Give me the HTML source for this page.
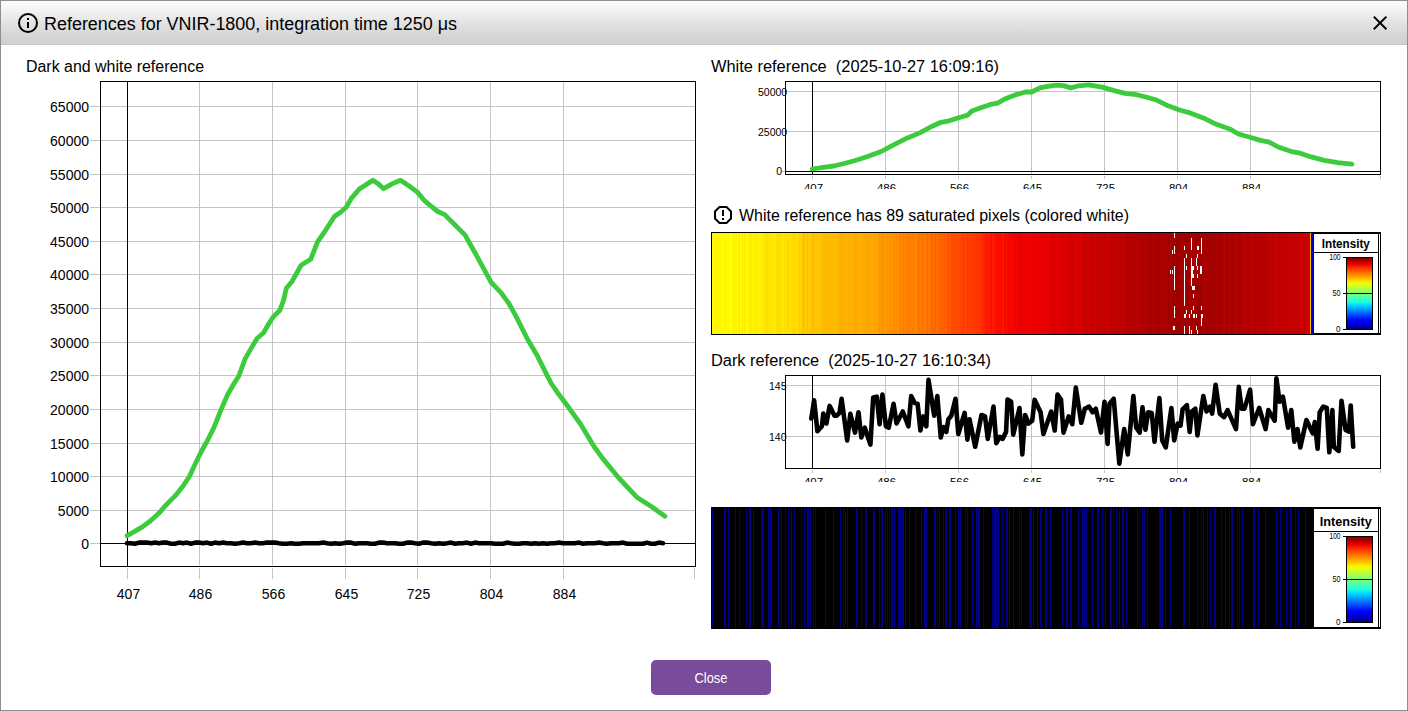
<!DOCTYPE html>
<html><head><meta charset="utf-8">
<style>
html,body{margin:0;padding:0;background:#fff;}
body{width:1408px;height:711px;position:relative;overflow:hidden;font-family:"Liberation Sans", sans-serif;}
.frame{position:absolute;left:0;top:0;width:1406px;height:709px;border:1px solid #8e8e8e;}
.title{position:absolute;left:1px;top:1px;width:1406px;height:43px;background:linear-gradient(#fdfdfd 0%,#f3f3f3 22%,#e2e2e2 52%,#d4d4d4 85%,#d1d1d1 100%);border-bottom:1px solid #c6c6c6;}
svg{position:absolute;left:0;top:0;}
svg text{font-family:"Liberation Sans", sans-serif;white-space:pre;}
.btn{position:absolute;left:651px;top:660px;width:120px;height:35px;background:#784b9b;border-radius:5px;}
</style></head><body>
<div class="frame"></div>
<div class="title"></div>
<div class="btn"></div>
<svg width="1408" height="711" viewBox="0 0 1408 711">
<defs>
<linearGradient id="jet" x1="0" y1="0" x2="0" y2="1"><stop offset="0.000" stop-color="#800000"/><stop offset="0.025" stop-color="#9c0000"/><stop offset="0.050" stop-color="#b90000"/><stop offset="0.075" stop-color="#d60000"/><stop offset="0.100" stop-color="#f30900"/><stop offset="0.125" stop-color="#ff2100"/><stop offset="0.150" stop-color="#ff3900"/><stop offset="0.175" stop-color="#ff5000"/><stop offset="0.200" stop-color="#ff6800"/><stop offset="0.225" stop-color="#ff8000"/><stop offset="0.250" stop-color="#ff9700"/><stop offset="0.275" stop-color="#ffaf00"/><stop offset="0.300" stop-color="#ffc600"/><stop offset="0.325" stop-color="#ffde00"/><stop offset="0.350" stop-color="#f7f600"/><stop offset="0.375" stop-color="#e2ff15"/><stop offset="0.400" stop-color="#ceff29"/><stop offset="0.425" stop-color="#b9ff3e"/><stop offset="0.450" stop-color="#a5ff52"/><stop offset="0.475" stop-color="#90ff67"/><stop offset="0.500" stop-color="#7bff7b"/><stop offset="0.525" stop-color="#67ff90"/><stop offset="0.550" stop-color="#52ffa5"/><stop offset="0.575" stop-color="#3effb9"/><stop offset="0.600" stop-color="#29ffce"/><stop offset="0.625" stop-color="#15ffe2"/><stop offset="0.650" stop-color="#00e5f7"/><stop offset="0.675" stop-color="#00ccff"/><stop offset="0.700" stop-color="#00b2ff"/><stop offset="0.725" stop-color="#0099ff"/><stop offset="0.750" stop-color="#0080ff"/><stop offset="0.775" stop-color="#0066ff"/><stop offset="0.800" stop-color="#004dff"/><stop offset="0.825" stop-color="#0033ff"/><stop offset="0.850" stop-color="#0019ff"/><stop offset="0.875" stop-color="#0000ff"/><stop offset="0.900" stop-color="#0000f3"/><stop offset="0.925" stop-color="#0000d6"/><stop offset="0.950" stop-color="#0000b9"/><stop offset="0.975" stop-color="#00009c"/><stop offset="1.000" stop-color="#000080"/></linearGradient>
</defs>
<circle cx="28" cy="23" r="9" fill="none" stroke="#000" stroke-width="2"/>
<rect x="27" y="22" width="2" height="6" fill="#000"/><rect x="27" y="18" width="2" height="2" fill="#000"/>
<path d="M1373.8,16.6 L1386.4,29.2 M1386.4,16.6 L1373.8,29.2" stroke="#000" stroke-width="2"/>
<text x="44" y="30" font-size="18" textLength="413" lengthAdjust="spacingAndGlyphs" fill="#000">References for VNIR-1800, integration time 1250 μs</text>
<text x="26" y="72" font-size="16" textLength="178" lengthAdjust="spacingAndGlyphs" fill="#000">Dark and white reference</text>
<text x="711" y="72" font-size="16" textLength="288" lengthAdjust="spacingAndGlyphs" fill="#000">White reference  (2025-10-27 16:09:16)</text>
<text x="739" y="221" font-size="16" textLength="390" lengthAdjust="spacingAndGlyphs" fill="#000">White reference has 89 saturated pixels (colored white)</text>
<text x="711" y="366" font-size="16" textLength="280" lengthAdjust="spacingAndGlyphs" fill="#000">Dark reference  (2025-10-27 16:10:34)</text>
<text x="711" y="683" font-size="14" text-anchor="middle" textLength="33" lengthAdjust="spacingAndGlyphs" fill="#fff">Close</text>
<rect x="90" y="543" width="10" height="1" fill="#c4c4c4"/>
<rect x="90" y="510" width="10" height="1" fill="#c4c4c4"/>
<rect x="101" y="510" width="594" height="1" fill="#c4c4c4"/>
<rect x="90" y="476" width="10" height="1" fill="#c4c4c4"/>
<rect x="101" y="476" width="594" height="1" fill="#c4c4c4"/>
<rect x="90" y="443" width="10" height="1" fill="#c4c4c4"/>
<rect x="101" y="443" width="594" height="1" fill="#c4c4c4"/>
<rect x="90" y="409" width="10" height="1" fill="#c4c4c4"/>
<rect x="101" y="409" width="594" height="1" fill="#c4c4c4"/>
<rect x="90" y="375" width="10" height="1" fill="#c4c4c4"/>
<rect x="101" y="375" width="594" height="1" fill="#c4c4c4"/>
<rect x="90" y="342" width="10" height="1" fill="#c4c4c4"/>
<rect x="101" y="342" width="594" height="1" fill="#c4c4c4"/>
<rect x="90" y="308" width="10" height="1" fill="#c4c4c4"/>
<rect x="101" y="308" width="594" height="1" fill="#c4c4c4"/>
<rect x="90" y="274" width="10" height="1" fill="#c4c4c4"/>
<rect x="101" y="274" width="594" height="1" fill="#c4c4c4"/>
<rect x="90" y="241" width="10" height="1" fill="#c4c4c4"/>
<rect x="101" y="241" width="594" height="1" fill="#c4c4c4"/>
<rect x="90" y="207" width="10" height="1" fill="#c4c4c4"/>
<rect x="101" y="207" width="594" height="1" fill="#c4c4c4"/>
<rect x="90" y="174" width="10" height="1" fill="#c4c4c4"/>
<rect x="101" y="174" width="594" height="1" fill="#c4c4c4"/>
<rect x="90" y="140" width="10" height="1" fill="#c4c4c4"/>
<rect x="101" y="140" width="594" height="1" fill="#c4c4c4"/>
<rect x="90" y="106" width="10" height="1" fill="#c4c4c4"/>
<rect x="101" y="106" width="594" height="1" fill="#c4c4c4"/>
<rect x="199" y="82" width="1" height="483" fill="#c4c4c4"/>
<rect x="272" y="82" width="1" height="483" fill="#c4c4c4"/>
<rect x="345" y="82" width="1" height="483" fill="#c4c4c4"/>
<rect x="417" y="82" width="1" height="483" fill="#c4c4c4"/>
<rect x="490" y="82" width="1" height="483" fill="#c4c4c4"/>
<rect x="563" y="82" width="1" height="483" fill="#c4c4c4"/>
<rect x="127" y="568" width="1" height="11" fill="#c4c4c4"/>
<rect x="199" y="568" width="1" height="11" fill="#c4c4c4"/>
<rect x="272" y="568" width="1" height="11" fill="#c4c4c4"/>
<rect x="345" y="568" width="1" height="11" fill="#c4c4c4"/>
<rect x="417" y="568" width="1" height="11" fill="#c4c4c4"/>
<rect x="490" y="568" width="1" height="11" fill="#c4c4c4"/>
<rect x="563" y="568" width="1" height="11" fill="#c4c4c4"/>
<rect x="694" y="568" width="1" height="11" fill="#c4c4c4"/>
<rect x="100.5" y="81.5" width="595" height="485" fill="none" stroke="#000"/>
<rect x="127" y="81" width="1" height="486" fill="#000"/>
<rect x="100" y="543" width="595" height="1" fill="#000"/>
<text x="89" y="549" font-size="14" text-anchor="end" fill="#000">0</text>
<text x="89" y="516" font-size="14" text-anchor="end" fill="#000">5000</text>
<text x="89" y="482" font-size="14" text-anchor="end" fill="#000">10000</text>
<text x="89" y="449" font-size="14" text-anchor="end" fill="#000">15000</text>
<text x="89" y="415" font-size="14" text-anchor="end" fill="#000">20000</text>
<text x="89" y="381" font-size="14" text-anchor="end" fill="#000">25000</text>
<text x="89" y="348" font-size="14" text-anchor="end" fill="#000">30000</text>
<text x="89" y="314" font-size="14" text-anchor="end" fill="#000">35000</text>
<text x="89" y="280" font-size="14" text-anchor="end" fill="#000">40000</text>
<text x="89" y="247" font-size="14" text-anchor="end" fill="#000">45000</text>
<text x="89" y="213" font-size="14" text-anchor="end" fill="#000">50000</text>
<text x="89" y="180" font-size="14" text-anchor="end" fill="#000">55000</text>
<text x="89" y="146" font-size="14" text-anchor="end" fill="#000">60000</text>
<text x="89" y="112" font-size="14" text-anchor="end" fill="#000">65000</text>
<text x="128.5" y="599" font-size="14" text-anchor="middle" fill="#000">407</text>
<text x="200.5" y="599" font-size="14" text-anchor="middle" fill="#000">486</text>
<text x="273.5" y="599" font-size="14" text-anchor="middle" fill="#000">566</text>
<text x="346.5" y="599" font-size="14" text-anchor="middle" fill="#000">645</text>
<text x="418.5" y="599" font-size="14" text-anchor="middle" fill="#000">725</text>
<text x="491.5" y="599" font-size="14" text-anchor="middle" fill="#000">804</text>
<text x="564.5" y="599" font-size="14" text-anchor="middle" fill="#000">884</text>
<path d="M127.1,535.7 L134.3,531.6 L142.4,526.9 L150.6,520.8 L158.8,513.3 L166.9,504.1 L175.1,495.9 L183.3,485.7 L189.4,476.5 L195.5,463.3 L201.6,451.0 L207.8,439.8 L213.9,427.6 L221.4,408.9 L227.8,394.3 L234.2,383.3 L238.8,376.0 L245.2,358.6 L251.6,347.6 L257.0,338.5 L263.4,333.0 L269.8,322.0 L273.5,316.6 L279.9,310.2 L283.6,300.1 L286.3,288.2 L291.8,281.8 L301.1,265.3 L310.7,259.3 L317.8,241.3 L323.8,233.0 L334.6,216.2 L340.6,212.2 L346.6,206.7 L351.3,198.3 L359.7,188.7 L368.1,183.4 L372.9,180.3 L377.7,183.4 L383.6,188.7 L392.0,183.9 L400.4,180.3 L408.8,185.8 L417.7,192.4 L423.9,200.1 L430.1,205.4 L437.8,211.5 L444.6,214.6 L453.3,223.3 L465.1,235.1 L475.0,252.7 L484.2,269.7 L491.0,282.1 L501.2,292.9 L509.0,303.7 L516.7,317.6 L527.5,339.3 L536.8,354.8 L546.1,373.3 L551.3,383.5 L559.1,394.8 L569.3,408.3 L580.5,424.0 L594.0,446.5 L603.0,458.9 L618.8,478.0 L636.8,497.2 L652.5,507.3 L664.9,516.3" fill="none" stroke="#3ccb3c" stroke-width="4.8" stroke-linejoin="round" stroke-linecap="round"/>
<path d="M127.0,543.2 L131.0,543.2 L135.0,543.7 L139.0,542.6 L143.0,542.6 L147.0,542.6 L151.0,543.2 L155.0,542.6 L159.0,543.2 L163.0,542.6 L167.0,542.6 L171.0,543.7 L175.0,543.7 L179.0,542.6 L183.0,543.2 L187.0,542.6 L191.0,543.7 L195.0,542.6 L199.0,542.6 L203.0,543.2 L207.0,542.6 L211.0,543.7 L215.0,542.6 L219.0,543.2 L223.0,542.6 L227.0,543.2 L231.0,543.2 L235.0,543.7 L239.0,543.2 L243.0,542.6 L247.0,543.2 L251.0,543.2 L255.0,542.6 L259.0,543.2 L263.0,543.2 L267.0,542.6 L271.0,542.6 L275.0,542.6 L279.0,543.2 L283.0,543.7 L287.0,543.7 L291.0,543.2 L295.0,543.7 L299.0,543.7 L303.0,543.2 L307.0,543.2 L311.0,543.2 L315.0,543.2 L319.0,543.2 L323.0,542.6 L327.0,543.2 L331.0,543.7 L335.0,543.2 L339.0,543.7 L343.0,543.2 L347.0,542.6 L351.0,542.6 L355.0,543.7 L359.0,543.2 L363.0,543.2 L367.0,543.2 L371.0,543.7 L375.0,543.7 L379.0,542.6 L383.0,542.6 L387.0,543.2 L391.0,543.2 L395.0,543.2 L399.0,543.7 L403.0,543.7 L407.0,542.6 L411.0,542.6 L415.0,543.2 L419.0,543.7 L423.0,542.6 L427.0,542.6 L431.0,543.2 L435.0,543.7 L439.0,543.2 L443.0,543.7 L447.0,543.2 L451.0,542.6 L455.0,543.7 L459.0,543.2 L463.0,543.2 L467.0,542.6 L471.0,543.7 L475.0,542.6 L479.0,543.2 L483.0,543.2 L487.0,543.2 L491.0,543.2 L495.0,543.7 L499.0,543.7 L503.0,543.7 L507.0,542.6 L511.0,543.2 L515.0,543.7 L519.0,543.7 L523.0,543.2 L527.0,543.2 L531.0,543.7 L535.0,543.2 L539.0,543.7 L543.0,543.2 L547.0,543.7 L551.0,543.2 L555.0,543.2 L559.0,542.6 L563.0,543.2 L567.0,543.2 L571.0,543.2 L575.0,543.2 L579.0,542.6 L583.0,543.7 L587.0,543.2 L591.0,543.2 L595.0,543.2 L599.0,542.6 L603.0,543.2 L607.0,543.7 L611.0,543.2 L615.0,543.2 L619.0,543.2 L623.0,542.6 L627.0,543.7 L631.0,543.7 L635.0,543.7 L639.0,543.7 L643.0,543.7 L647.0,542.6 L651.0,543.7 L655.0,543.7 L659.0,542.6 L663.0,543.2" fill="none" stroke="#000" stroke-width="4.6" stroke-linejoin="round" stroke-linecap="round"/>
<rect x="782" y="91" width="598" height="1" fill="#c4c4c4"/>
<rect x="782" y="131" width="598" height="1" fill="#c4c4c4"/>
<rect x="782" y="171" width="598" height="1" fill="#c4c4c4"/>
<rect x="885" y="82" width="1" height="92" fill="#c4c4c4"/>
<rect x="958" y="82" width="1" height="92" fill="#c4c4c4"/>
<rect x="1031" y="82" width="1" height="92" fill="#c4c4c4"/>
<rect x="1104" y="82" width="1" height="92" fill="#c4c4c4"/>
<rect x="1177" y="82" width="1" height="92" fill="#c4c4c4"/>
<rect x="1250" y="82" width="1" height="92" fill="#c4c4c4"/>
<rect x="812" y="176" width="1" height="3" fill="#c4c4c4"/>
<rect x="885" y="176" width="1" height="3" fill="#c4c4c4"/>
<rect x="958" y="176" width="1" height="3" fill="#c4c4c4"/>
<rect x="1031" y="176" width="1" height="3" fill="#c4c4c4"/>
<rect x="1104" y="176" width="1" height="3" fill="#c4c4c4"/>
<rect x="1177" y="176" width="1" height="3" fill="#c4c4c4"/>
<rect x="1250" y="176" width="1" height="3" fill="#c4c4c4"/>
<rect x="1380" y="176" width="1" height="3" fill="#c4c4c4"/>
<g clip-path="url(#clip81)">
<text x="813.5" y="192" font-size="11.5" text-anchor="middle" fill="#000">407</text>
<text x="886.5" y="192" font-size="11.5" text-anchor="middle" fill="#000">486</text>
<text x="959.5" y="192" font-size="11.5" text-anchor="middle" fill="#000">566</text>
<text x="1032.5" y="192" font-size="11.5" text-anchor="middle" fill="#000">645</text>
<text x="1105.5" y="192" font-size="11.5" text-anchor="middle" fill="#000">725</text>
<text x="1178.5" y="192" font-size="11.5" text-anchor="middle" fill="#000">804</text>
<text x="1251.5" y="192" font-size="11.5" text-anchor="middle" fill="#000">884</text>
</g>
<clipPath id="clip81"><rect x="770" y="179" width="620" height="10"/></clipPath>
<text x="758" y="96" font-size="10.5" fill="#000">50000</text>
<text x="758" y="136" font-size="10.5" fill="#000">25000</text>
<text x="782" y="175" font-size="10.5" text-anchor="end" fill="#000">0</text>
<rect x="785.5" y="81.5" width="595" height="93" fill="none" stroke="#000"/>
<rect x="812" y="81" width="1" height="94" fill="#000"/>
<rect x="785" y="171" width="596" height="1" fill="#000"/>
<path d="M812.2,169.0 L821.5,167.6 L833.8,166.0 L844.1,163.5 L854.4,160.8 L866.8,156.7 L881.2,151.5 L893.6,144.9 L908.0,137.7 L920.3,132.6 L930.6,127.0 L940.9,122.3 L949.2,120.8 L959.5,117.5 L967.7,115.1 L971.8,111.0 L980.1,107.9 L990.4,104.4 L997.6,103.1 L1004.8,99.0 L1015.1,94.9 L1025.4,92.0 L1031.6,92.0 L1039.8,87.9 L1046.0,86.7 L1056.3,85.2 L1063.5,85.6 L1070.7,87.9 L1078.9,85.8 L1088.8,84.9 L1102.0,87.1 L1115.2,90.9 L1126.2,93.7 L1135.0,94.4 L1146.0,97.0 L1157.1,100.3 L1168.1,105.8 L1180.2,110.2 L1190.1,112.9 L1203.3,117.9 L1214.3,123.4 L1229.7,128.9 L1238.5,134.0 L1251.7,137.7 L1260.5,140.4 L1269.3,142.2 L1278.2,147.0 L1291.4,151.6 L1300.2,153.2 L1311.2,156.9 L1324.4,160.4 L1337.6,162.6 L1351.9,164.2" fill="none" stroke="#3ccb3c" stroke-width="4.8" stroke-linejoin="round" stroke-linecap="round"/>
<path d="M719.5,207 L726.5,207 L731,211.5 L731,218.5 L726.5,223 L719.5,223 L715,218.5 L715,211.5 Z" fill="none" stroke="#000" stroke-width="2"/>
<rect x="722" y="210" width="2" height="6" fill="#000"/><rect x="722" y="218" width="2" height="2" fill="#000"/>
<rect x="712" y="233" width="1" height="101" fill="#fff600"/>
<rect x="713" y="233" width="1" height="101" fill="#fff900"/>
<rect x="714" y="233" width="1" height="101" fill="#fff800"/>
<rect x="715" y="233" width="1" height="101" fill="#fffb00"/>
<rect x="716" y="233" width="1" height="101" fill="#fff500"/>
<rect x="717" y="233" width="1" height="101" fill="#fff400"/>
<rect x="718" y="233" width="1" height="101" fill="#fff600"/>
<rect x="719" y="233" width="1" height="101" fill="#fff500"/>
<rect x="720" y="233" width="1" height="101" fill="#fffa00"/>
<rect x="721" y="233" width="1" height="101" fill="#fff300"/>
<rect x="722" y="233" width="1" height="101" fill="#ffff00"/>
<rect x="723" y="233" width="1" height="101" fill="#fffe00"/>
<rect x="724" y="233" width="1" height="101" fill="#fff500"/>
<rect x="725" y="233" width="1" height="101" fill="#fff600"/>
<rect x="726" y="233" width="1" height="101" fill="#fff800"/>
<rect x="727" y="233" width="1" height="101" fill="#fff800"/>
<rect x="728" y="233" width="1" height="101" fill="#fff300"/>
<rect x="729" y="233" width="1" height="101" fill="#ffff00"/>
<rect x="730" y="233" width="1" height="101" fill="#ffff00"/>
<rect x="731" y="233" width="1" height="101" fill="#fff900"/>
<rect x="732" y="233" width="1" height="101" fill="#fff900"/>
<rect x="733" y="233" width="1" height="101" fill="#fff000"/>
<rect x="734" y="233" width="1" height="101" fill="#fff000"/>
<rect x="735" y="233" width="1" height="101" fill="#fff400"/>
<rect x="736" y="233" width="1" height="101" fill="#fff200"/>
<rect x="737" y="233" width="1" height="101" fill="#fffd00"/>
<rect x="738" y="233" width="1" height="101" fill="#ffef00"/>
<rect x="739" y="233" width="1" height="101" fill="#ffec00"/>
<rect x="740" y="233" width="1" height="101" fill="#fffe00"/>
<rect x="741" y="233" width="1" height="101" fill="#fff500"/>
<rect x="742" y="233" width="1" height="101" fill="#ffed00"/>
<rect x="743" y="233" width="1" height="101" fill="#fff400"/>
<rect x="744" y="233" width="1" height="101" fill="#ffe900"/>
<rect x="745" y="233" width="1" height="101" fill="#fff300"/>
<rect x="746" y="233" width="1" height="101" fill="#fffb00"/>
<rect x="747" y="233" width="1" height="101" fill="#fff900"/>
<rect x="748" y="233" width="1" height="101" fill="#fff500"/>
<rect x="749" y="233" width="1" height="101" fill="#ffeb00"/>
<rect x="750" y="233" width="1" height="101" fill="#ffed00"/>
<rect x="751" y="233" width="1" height="101" fill="#ffe900"/>
<rect x="752" y="233" width="1" height="101" fill="#fff400"/>
<rect x="753" y="233" width="1" height="101" fill="#ffef00"/>
<rect x="754" y="233" width="1" height="101" fill="#fff300"/>
<rect x="755" y="233" width="1" height="101" fill="#ffea00"/>
<rect x="756" y="233" width="1" height="101" fill="#ffe700"/>
<rect x="757" y="233" width="1" height="101" fill="#fff200"/>
<rect x="758" y="233" width="1" height="101" fill="#fff500"/>
<rect x="759" y="233" width="1" height="101" fill="#fff200"/>
<rect x="760" y="233" width="1" height="101" fill="#fff100"/>
<rect x="761" y="233" width="1" height="101" fill="#fff000"/>
<rect x="762" y="233" width="1" height="101" fill="#ffee00"/>
<rect x="763" y="233" width="1" height="101" fill="#ffe400"/>
<rect x="764" y="233" width="1" height="101" fill="#ffe900"/>
<rect x="765" y="233" width="1" height="101" fill="#ffe500"/>
<rect x="766" y="233" width="1" height="101" fill="#ffde00"/>
<rect x="767" y="233" width="1" height="101" fill="#ffdd00"/>
<rect x="768" y="233" width="1" height="101" fill="#ffe200"/>
<rect x="769" y="233" width="1" height="101" fill="#ffe100"/>
<rect x="770" y="233" width="1" height="101" fill="#ffe900"/>
<rect x="771" y="233" width="1" height="101" fill="#ffee00"/>
<rect x="772" y="233" width="1" height="101" fill="#ffe300"/>
<rect x="773" y="233" width="1" height="101" fill="#ffec00"/>
<rect x="774" y="233" width="1" height="101" fill="#ffed00"/>
<rect x="775" y="233" width="1" height="101" fill="#ffec00"/>
<rect x="776" y="233" width="1" height="101" fill="#ffdf00"/>
<rect x="777" y="233" width="1" height="101" fill="#ffdc00"/>
<rect x="778" y="233" width="1" height="101" fill="#ffdc00"/>
<rect x="779" y="233" width="1" height="101" fill="#ffda00"/>
<rect x="780" y="233" width="1" height="101" fill="#ffda00"/>
<rect x="781" y="233" width="1" height="101" fill="#ffe200"/>
<rect x="782" y="233" width="1" height="101" fill="#ffe700"/>
<rect x="783" y="233" width="1" height="101" fill="#ffe500"/>
<rect x="784" y="233" width="1" height="101" fill="#ffdd00"/>
<rect x="785" y="233" width="1" height="101" fill="#ffe000"/>
<rect x="786" y="233" width="1" height="101" fill="#ffe300"/>
<rect x="787" y="233" width="1" height="101" fill="#ffd400"/>
<rect x="788" y="233" width="1" height="101" fill="#ffdf00"/>
<rect x="789" y="233" width="1" height="101" fill="#ffe300"/>
<rect x="790" y="233" width="1" height="101" fill="#ffe000"/>
<rect x="791" y="233" width="1" height="101" fill="#ffdf00"/>
<rect x="792" y="233" width="1" height="101" fill="#ffd900"/>
<rect x="793" y="233" width="1" height="101" fill="#ffd300"/>
<rect x="794" y="233" width="1" height="101" fill="#ffde00"/>
<rect x="795" y="233" width="1" height="101" fill="#ffd500"/>
<rect x="796" y="233" width="1" height="101" fill="#ffde00"/>
<rect x="797" y="233" width="1" height="101" fill="#ffe000"/>
<rect x="798" y="233" width="1" height="101" fill="#ffd200"/>
<rect x="799" y="233" width="1" height="101" fill="#ffd000"/>
<rect x="800" y="233" width="1" height="101" fill="#ffd800"/>
<rect x="801" y="233" width="1" height="101" fill="#ffd100"/>
<rect x="802" y="233" width="1" height="101" fill="#ffc400"/>
<rect x="803" y="233" width="1" height="101" fill="#ffc100"/>
<rect x="804" y="233" width="1" height="101" fill="#ffc000"/>
<rect x="805" y="233" width="1" height="101" fill="#ffcf00"/>
<rect x="806" y="233" width="1" height="101" fill="#ffcc00"/>
<rect x="807" y="233" width="1" height="101" fill="#ffbf00"/>
<rect x="808" y="233" width="1" height="101" fill="#ffcc00"/>
<rect x="809" y="233" width="1" height="101" fill="#ffce00"/>
<rect x="810" y="233" width="1" height="101" fill="#ffc700"/>
<rect x="811" y="233" width="1" height="101" fill="#ffc000"/>
<rect x="812" y="233" width="1" height="101" fill="#ffc400"/>
<rect x="813" y="233" width="1" height="101" fill="#ffbb00"/>
<rect x="814" y="233" width="1" height="101" fill="#ffb800"/>
<rect x="815" y="233" width="1" height="101" fill="#ffca00"/>
<rect x="816" y="233" width="1" height="101" fill="#ffc300"/>
<rect x="817" y="233" width="1" height="101" fill="#ffc000"/>
<rect x="818" y="233" width="1" height="101" fill="#ffc800"/>
<rect x="819" y="233" width="1" height="101" fill="#ffbd00"/>
<rect x="820" y="233" width="1" height="101" fill="#ffc500"/>
<rect x="821" y="233" width="1" height="101" fill="#ffc400"/>
<rect x="822" y="233" width="1" height="101" fill="#ffb700"/>
<rect x="823" y="233" width="1" height="101" fill="#ffb800"/>
<rect x="824" y="233" width="1" height="101" fill="#ffb800"/>
<rect x="825" y="233" width="1" height="101" fill="#ffb600"/>
<rect x="826" y="233" width="1" height="101" fill="#ffbd00"/>
<rect x="827" y="233" width="1" height="101" fill="#ffb600"/>
<rect x="828" y="233" width="1" height="101" fill="#ffb900"/>
<rect x="829" y="233" width="1" height="101" fill="#ffb200"/>
<rect x="830" y="233" width="1" height="101" fill="#ffc100"/>
<rect x="831" y="233" width="1" height="101" fill="#ffb600"/>
<rect x="832" y="233" width="1" height="101" fill="#ffb700"/>
<rect x="833" y="233" width="1" height="101" fill="#ffb900"/>
<rect x="834" y="233" width="1" height="101" fill="#ffbf00"/>
<rect x="835" y="233" width="1" height="101" fill="#ffb500"/>
<rect x="836" y="233" width="1" height="101" fill="#ffbf00"/>
<rect x="837" y="233" width="1" height="101" fill="#ffb600"/>
<rect x="838" y="233" width="1" height="101" fill="#ffb600"/>
<rect x="839" y="233" width="1" height="101" fill="#ffb500"/>
<rect x="840" y="233" width="1" height="101" fill="#ffab00"/>
<rect x="841" y="233" width="1" height="101" fill="#ffb300"/>
<rect x="842" y="233" width="1" height="101" fill="#ffad00"/>
<rect x="843" y="233" width="1" height="101" fill="#ffa900"/>
<rect x="844" y="233" width="1" height="101" fill="#ffb800"/>
<rect x="845" y="233" width="1" height="101" fill="#ffab00"/>
<rect x="846" y="233" width="1" height="101" fill="#ffb100"/>
<rect x="847" y="233" width="1" height="101" fill="#ffb500"/>
<rect x="848" y="233" width="1" height="101" fill="#ffb200"/>
<rect x="849" y="233" width="1" height="101" fill="#ffad00"/>
<rect x="850" y="233" width="1" height="101" fill="#ffb000"/>
<rect x="851" y="233" width="1" height="101" fill="#ffb000"/>
<rect x="852" y="233" width="1" height="101" fill="#ffb400"/>
<rect x="853" y="233" width="1" height="101" fill="#ffa600"/>
<rect x="854" y="233" width="1" height="101" fill="#ffae00"/>
<rect x="855" y="233" width="1" height="101" fill="#ffa800"/>
<rect x="856" y="233" width="1" height="101" fill="#ffa800"/>
<rect x="857" y="233" width="1" height="101" fill="#ffb100"/>
<rect x="858" y="233" width="1" height="101" fill="#ffab00"/>
<rect x="859" y="233" width="1" height="101" fill="#ffac00"/>
<rect x="860" y="233" width="1" height="101" fill="#ffaf00"/>
<rect x="861" y="233" width="1" height="101" fill="#ffb200"/>
<rect x="862" y="233" width="1" height="101" fill="#ffa800"/>
<rect x="863" y="233" width="1" height="101" fill="#ffab00"/>
<rect x="864" y="233" width="1" height="101" fill="#ffa800"/>
<rect x="865" y="233" width="1" height="101" fill="#ffa700"/>
<rect x="866" y="233" width="1" height="101" fill="#ffaa00"/>
<rect x="867" y="233" width="1" height="101" fill="#ffa500"/>
<rect x="868" y="233" width="1" height="101" fill="#ffa600"/>
<rect x="869" y="233" width="1" height="101" fill="#ffa500"/>
<rect x="870" y="233" width="1" height="101" fill="#ffad00"/>
<rect x="871" y="233" width="1" height="101" fill="#ffa800"/>
<rect x="872" y="233" width="1" height="101" fill="#ffab00"/>
<rect x="873" y="233" width="1" height="101" fill="#ffac00"/>
<rect x="874" y="233" width="1" height="101" fill="#ff9d00"/>
<rect x="875" y="233" width="1" height="101" fill="#ffa300"/>
<rect x="876" y="233" width="1" height="101" fill="#ffaa00"/>
<rect x="877" y="233" width="1" height="101" fill="#ffa700"/>
<rect x="878" y="233" width="1" height="101" fill="#ff9900"/>
<rect x="879" y="233" width="1" height="101" fill="#ff9700"/>
<rect x="880" y="233" width="1" height="101" fill="#ff9c00"/>
<rect x="881" y="233" width="1" height="101" fill="#ff9300"/>
<rect x="882" y="233" width="1" height="101" fill="#ff9500"/>
<rect x="883" y="233" width="1" height="101" fill="#ff9100"/>
<rect x="884" y="233" width="1" height="101" fill="#ff9b00"/>
<rect x="885" y="233" width="1" height="101" fill="#ff9c00"/>
<rect x="886" y="233" width="1" height="101" fill="#ff9d00"/>
<rect x="887" y="233" width="1" height="101" fill="#ff8d00"/>
<rect x="888" y="233" width="1" height="101" fill="#ff9700"/>
<rect x="889" y="233" width="1" height="101" fill="#ff9500"/>
<rect x="890" y="233" width="1" height="101" fill="#ff8900"/>
<rect x="891" y="233" width="1" height="101" fill="#ff9600"/>
<rect x="892" y="233" width="1" height="101" fill="#ff9700"/>
<rect x="893" y="233" width="1" height="101" fill="#ff8600"/>
<rect x="894" y="233" width="1" height="101" fill="#ff9400"/>
<rect x="895" y="233" width="1" height="101" fill="#ff8900"/>
<rect x="896" y="233" width="1" height="101" fill="#ff8a00"/>
<rect x="897" y="233" width="1" height="101" fill="#ff9300"/>
<rect x="898" y="233" width="1" height="101" fill="#ff8f00"/>
<rect x="899" y="233" width="1" height="101" fill="#ff8100"/>
<rect x="900" y="233" width="1" height="101" fill="#ff8600"/>
<rect x="901" y="233" width="1" height="101" fill="#ff8700"/>
<rect x="902" y="233" width="1" height="101" fill="#ff8300"/>
<rect x="903" y="233" width="1" height="101" fill="#ff7f00"/>
<rect x="904" y="233" width="1" height="101" fill="#ff8100"/>
<rect x="905" y="233" width="1" height="101" fill="#ff8800"/>
<rect x="906" y="233" width="1" height="101" fill="#ff7900"/>
<rect x="907" y="233" width="1" height="101" fill="#ff8300"/>
<rect x="908" y="233" width="1" height="101" fill="#ff8000"/>
<rect x="909" y="233" width="1" height="101" fill="#ff7700"/>
<rect x="910" y="233" width="1" height="101" fill="#ff7d00"/>
<rect x="911" y="233" width="1" height="101" fill="#ff8200"/>
<rect x="912" y="233" width="1" height="101" fill="#ff7f00"/>
<rect x="913" y="233" width="1" height="101" fill="#ff7500"/>
<rect x="914" y="233" width="1" height="101" fill="#ff8700"/>
<rect x="915" y="233" width="1" height="101" fill="#ff8300"/>
<rect x="916" y="233" width="1" height="101" fill="#ff8600"/>
<rect x="917" y="233" width="1" height="101" fill="#ff7400"/>
<rect x="918" y="233" width="1" height="101" fill="#ff7600"/>
<rect x="919" y="233" width="1" height="101" fill="#ff7100"/>
<rect x="920" y="233" width="1" height="101" fill="#ff7f00"/>
<rect x="921" y="233" width="1" height="101" fill="#ff7400"/>
<rect x="922" y="233" width="1" height="101" fill="#ff7100"/>
<rect x="923" y="233" width="1" height="101" fill="#ff7500"/>
<rect x="924" y="233" width="1" height="101" fill="#ff7e00"/>
<rect x="925" y="233" width="1" height="101" fill="#ff7b00"/>
<rect x="926" y="233" width="1" height="101" fill="#ff6e00"/>
<rect x="927" y="233" width="1" height="101" fill="#ff6b00"/>
<rect x="928" y="233" width="1" height="101" fill="#ff7900"/>
<rect x="929" y="233" width="1" height="101" fill="#ff7100"/>
<rect x="930" y="233" width="1" height="101" fill="#ff7200"/>
<rect x="931" y="233" width="1" height="101" fill="#ff6500"/>
<rect x="932" y="233" width="1" height="101" fill="#ff6300"/>
<rect x="933" y="233" width="1" height="101" fill="#ff6e00"/>
<rect x="934" y="233" width="1" height="101" fill="#ff6800"/>
<rect x="935" y="233" width="1" height="101" fill="#ff6000"/>
<rect x="936" y="233" width="1" height="101" fill="#ff7000"/>
<rect x="937" y="233" width="1" height="101" fill="#ff6900"/>
<rect x="938" y="233" width="1" height="101" fill="#ff6b00"/>
<rect x="939" y="233" width="1" height="101" fill="#ff5b00"/>
<rect x="940" y="233" width="1" height="101" fill="#ff6900"/>
<rect x="941" y="233" width="1" height="101" fill="#ff5800"/>
<rect x="942" y="233" width="1" height="101" fill="#ff6700"/>
<rect x="943" y="233" width="1" height="101" fill="#ff5e00"/>
<rect x="944" y="233" width="1" height="101" fill="#ff5a00"/>
<rect x="945" y="233" width="1" height="101" fill="#ff5d00"/>
<rect x="946" y="233" width="1" height="101" fill="#ff6400"/>
<rect x="947" y="233" width="1" height="101" fill="#ff5500"/>
<rect x="948" y="233" width="1" height="101" fill="#ff5100"/>
<rect x="949" y="233" width="1" height="101" fill="#ff5800"/>
<rect x="950" y="233" width="1" height="101" fill="#ff5100"/>
<rect x="951" y="233" width="1" height="101" fill="#ff4d00"/>
<rect x="952" y="233" width="1" height="101" fill="#ff4d00"/>
<rect x="953" y="233" width="1" height="101" fill="#ff4900"/>
<rect x="954" y="233" width="1" height="101" fill="#ff4b00"/>
<rect x="955" y="233" width="1" height="101" fill="#ff4c00"/>
<rect x="956" y="233" width="1" height="101" fill="#ff4b00"/>
<rect x="957" y="233" width="1" height="101" fill="#ff5200"/>
<rect x="958" y="233" width="1" height="101" fill="#ff4800"/>
<rect x="959" y="233" width="1" height="101" fill="#ff4a00"/>
<rect x="960" y="233" width="1" height="101" fill="#ff4300"/>
<rect x="961" y="233" width="1" height="101" fill="#ff4500"/>
<rect x="962" y="233" width="1" height="101" fill="#ff3d00"/>
<rect x="963" y="233" width="1" height="101" fill="#ff4000"/>
<rect x="964" y="233" width="1" height="101" fill="#ff3a00"/>
<rect x="965" y="233" width="1" height="101" fill="#ff4700"/>
<rect x="966" y="233" width="1" height="101" fill="#ff4200"/>
<rect x="967" y="233" width="1" height="101" fill="#ff3a00"/>
<rect x="968" y="233" width="1" height="101" fill="#ff3e00"/>
<rect x="969" y="233" width="1" height="101" fill="#ff4600"/>
<rect x="970" y="233" width="1" height="101" fill="#ff3400"/>
<rect x="971" y="233" width="1" height="101" fill="#ff4100"/>
<rect x="972" y="233" width="1" height="101" fill="#ff3800"/>
<rect x="973" y="233" width="1" height="101" fill="#ff3800"/>
<rect x="974" y="233" width="1" height="101" fill="#ff3d00"/>
<rect x="975" y="233" width="1" height="101" fill="#ff3200"/>
<rect x="976" y="233" width="1" height="101" fill="#ff3300"/>
<rect x="977" y="233" width="1" height="101" fill="#ff3400"/>
<rect x="978" y="233" width="1" height="101" fill="#ff3900"/>
<rect x="979" y="233" width="1" height="101" fill="#ff2a00"/>
<rect x="980" y="233" width="1" height="101" fill="#ff3200"/>
<rect x="981" y="233" width="1" height="101" fill="#ff2e00"/>
<rect x="982" y="233" width="1" height="101" fill="#ff2a00"/>
<rect x="983" y="233" width="1" height="101" fill="#ff2400"/>
<rect x="984" y="233" width="1" height="101" fill="#ff2100"/>
<rect x="985" y="233" width="1" height="101" fill="#ff1900"/>
<rect x="986" y="233" width="1" height="101" fill="#ff1900"/>
<rect x="987" y="233" width="1" height="101" fill="#ff1600"/>
<rect x="988" y="233" width="1" height="101" fill="#ff2200"/>
<rect x="989" y="233" width="1" height="101" fill="#ff1600"/>
<rect x="990" y="233" width="1" height="101" fill="#ff1200"/>
<rect x="991" y="233" width="1" height="101" fill="#ff0f00"/>
<rect x="992" y="233" width="1" height="101" fill="#ff1c00"/>
<rect x="993" y="233" width="1" height="101" fill="#ff1b00"/>
<rect x="994" y="233" width="1" height="101" fill="#ff1500"/>
<rect x="995" y="233" width="1" height="101" fill="#ff0c00"/>
<rect x="996" y="233" width="1" height="101" fill="#fe0a00"/>
<rect x="997" y="233" width="1" height="101" fill="#fe0b00"/>
<rect x="998" y="233" width="1" height="101" fill="#fd0d00"/>
<rect x="999" y="233" width="1" height="101" fill="#fd0700"/>
<rect x="1000" y="233" width="1" height="101" fill="#fc0c00"/>
<rect x="1001" y="233" width="1" height="101" fill="#fc0700"/>
<rect x="1002" y="233" width="1" height="101" fill="#fb1500"/>
<rect x="1003" y="233" width="1" height="101" fill="#fb1400"/>
<rect x="1004" y="233" width="1" height="101" fill="#fa0b00"/>
<rect x="1005" y="233" width="1" height="101" fill="#fa0400"/>
<rect x="1006" y="233" width="1" height="101" fill="#f91200"/>
<rect x="1007" y="233" width="1" height="101" fill="#f90500"/>
<rect x="1008" y="233" width="1" height="101" fill="#f80500"/>
<rect x="1009" y="233" width="1" height="101" fill="#f80000"/>
<rect x="1010" y="233" width="1" height="101" fill="#f70400"/>
<rect x="1011" y="233" width="1" height="101" fill="#f70500"/>
<rect x="1012" y="233" width="1" height="101" fill="#f60500"/>
<rect x="1013" y="233" width="1" height="101" fill="#f00400"/>
<rect x="1014" y="233" width="1" height="101" fill="#f50400"/>
<rect x="1015" y="233" width="1" height="101" fill="#ec0300"/>
<rect x="1016" y="233" width="1" height="101" fill="#f00300"/>
<rect x="1017" y="233" width="1" height="101" fill="#ec0200"/>
<rect x="1018" y="233" width="1" height="101" fill="#f10100"/>
<rect x="1019" y="233" width="1" height="101" fill="#ea0100"/>
<rect x="1020" y="233" width="1" height="101" fill="#e90000"/>
<rect x="1021" y="233" width="1" height="101" fill="#ee0000"/>
<rect x="1022" y="233" width="1" height="101" fill="#ec0000"/>
<rect x="1023" y="233" width="1" height="101" fill="#f20000"/>
<rect x="1024" y="233" width="1" height="101" fill="#f10000"/>
<rect x="1025" y="233" width="1" height="101" fill="#f40000"/>
<rect x="1026" y="233" width="1" height="101" fill="#f20000"/>
<rect x="1027" y="233" width="1" height="101" fill="#f30000"/>
<rect x="1028" y="233" width="1" height="101" fill="#f50000"/>
<rect x="1029" y="233" width="1" height="101" fill="#ec0000"/>
<rect x="1030" y="233" width="1" height="101" fill="#ea0000"/>
<rect x="1031" y="233" width="1" height="101" fill="#f50000"/>
<rect x="1032" y="233" width="1" height="101" fill="#e60000"/>
<rect x="1033" y="233" width="1" height="101" fill="#f00000"/>
<rect x="1034" y="233" width="1" height="101" fill="#ee0000"/>
<rect x="1035" y="233" width="1" height="101" fill="#e30000"/>
<rect x="1036" y="233" width="1" height="101" fill="#f00000"/>
<rect x="1037" y="233" width="1" height="101" fill="#f10000"/>
<rect x="1038" y="233" width="1" height="101" fill="#ec0000"/>
<rect x="1039" y="233" width="1" height="101" fill="#ed0000"/>
<rect x="1040" y="233" width="1" height="101" fill="#ee0000"/>
<rect x="1041" y="233" width="1" height="101" fill="#e10000"/>
<rect x="1042" y="233" width="1" height="101" fill="#e80000"/>
<rect x="1043" y="233" width="1" height="101" fill="#e70000"/>
<rect x="1044" y="233" width="1" height="101" fill="#ed0000"/>
<rect x="1045" y="233" width="1" height="101" fill="#eb0000"/>
<rect x="1046" y="233" width="1" height="101" fill="#eb0000"/>
<rect x="1047" y="233" width="1" height="101" fill="#e60000"/>
<rect x="1048" y="233" width="1" height="101" fill="#eb0000"/>
<rect x="1049" y="233" width="1" height="101" fill="#e70000"/>
<rect x="1050" y="233" width="1" height="101" fill="#e70000"/>
<rect x="1051" y="233" width="1" height="101" fill="#de0000"/>
<rect x="1052" y="233" width="1" height="101" fill="#da0000"/>
<rect x="1053" y="233" width="1" height="101" fill="#db0000"/>
<rect x="1054" y="233" width="1" height="101" fill="#df0000"/>
<rect x="1055" y="233" width="1" height="101" fill="#da0000"/>
<rect x="1056" y="233" width="1" height="101" fill="#e60000"/>
<rect x="1057" y="233" width="1" height="101" fill="#e10000"/>
<rect x="1058" y="233" width="1" height="101" fill="#e10000"/>
<rect x="1059" y="233" width="1" height="101" fill="#e10000"/>
<rect x="1060" y="233" width="1" height="101" fill="#e10000"/>
<rect x="1061" y="233" width="1" height="101" fill="#dd0000"/>
<rect x="1062" y="233" width="1" height="101" fill="#d40000"/>
<rect x="1063" y="233" width="1" height="101" fill="#e20000"/>
<rect x="1064" y="233" width="1" height="101" fill="#e00000"/>
<rect x="1065" y="233" width="1" height="101" fill="#db0000"/>
<rect x="1066" y="233" width="1" height="101" fill="#db0000"/>
<rect x="1067" y="233" width="1" height="101" fill="#dd0000"/>
<rect x="1068" y="233" width="1" height="101" fill="#d20000"/>
<rect x="1069" y="233" width="1" height="101" fill="#dd0000"/>
<rect x="1070" y="233" width="1" height="101" fill="#d40000"/>
<rect x="1071" y="233" width="1" height="101" fill="#d00000"/>
<rect x="1072" y="233" width="1" height="101" fill="#d30000"/>
<rect x="1073" y="233" width="1" height="101" fill="#db0000"/>
<rect x="1074" y="233" width="1" height="101" fill="#d10000"/>
<rect x="1075" y="233" width="1" height="101" fill="#da0000"/>
<rect x="1076" y="233" width="1" height="101" fill="#de0000"/>
<rect x="1077" y="233" width="1" height="101" fill="#d50000"/>
<rect x="1078" y="233" width="1" height="101" fill="#d20000"/>
<rect x="1079" y="233" width="1" height="101" fill="#d30000"/>
<rect x="1080" y="233" width="1" height="101" fill="#d60000"/>
<rect x="1081" y="233" width="1" height="101" fill="#d70000"/>
<rect x="1082" y="233" width="1" height="101" fill="#d40000"/>
<rect x="1083" y="233" width="1" height="101" fill="#d40000"/>
<rect x="1084" y="233" width="1" height="101" fill="#c90000"/>
<rect x="1085" y="233" width="1" height="101" fill="#ca0000"/>
<rect x="1086" y="233" width="1" height="101" fill="#cb0000"/>
<rect x="1087" y="233" width="1" height="101" fill="#d30000"/>
<rect x="1088" y="233" width="1" height="101" fill="#cb0000"/>
<rect x="1089" y="233" width="1" height="101" fill="#cf0000"/>
<rect x="1090" y="233" width="1" height="101" fill="#c50000"/>
<rect x="1091" y="233" width="1" height="101" fill="#c50000"/>
<rect x="1092" y="233" width="1" height="101" fill="#c80000"/>
<rect x="1093" y="233" width="1" height="101" fill="#cf0000"/>
<rect x="1094" y="233" width="1" height="101" fill="#ce0000"/>
<rect x="1095" y="233" width="1" height="101" fill="#ce0000"/>
<rect x="1096" y="233" width="1" height="101" fill="#c60000"/>
<rect x="1097" y="233" width="1" height="101" fill="#ca0000"/>
<rect x="1098" y="233" width="1" height="101" fill="#c80000"/>
<rect x="1099" y="233" width="1" height="101" fill="#c80000"/>
<rect x="1100" y="233" width="1" height="101" fill="#c10000"/>
<rect x="1101" y="233" width="1" height="101" fill="#ce0000"/>
<rect x="1102" y="233" width="1" height="101" fill="#c10000"/>
<rect x="1103" y="233" width="1" height="101" fill="#ce0000"/>
<rect x="1104" y="233" width="1" height="101" fill="#cd0000"/>
<rect x="1105" y="233" width="1" height="101" fill="#bc0000"/>
<rect x="1106" y="233" width="1" height="101" fill="#c30000"/>
<rect x="1107" y="233" width="1" height="101" fill="#c90000"/>
<rect x="1108" y="233" width="1" height="101" fill="#cb0000"/>
<rect x="1109" y="233" width="1" height="101" fill="#c10000"/>
<rect x="1110" y="233" width="1" height="101" fill="#be0000"/>
<rect x="1111" y="233" width="1" height="101" fill="#bc0000"/>
<rect x="1112" y="233" width="1" height="101" fill="#c90000"/>
<rect x="1113" y="233" width="1" height="101" fill="#bb0000"/>
<rect x="1114" y="233" width="1" height="101" fill="#c10000"/>
<rect x="1115" y="233" width="1" height="101" fill="#b80000"/>
<rect x="1116" y="233" width="1" height="101" fill="#bf0000"/>
<rect x="1117" y="233" width="1" height="101" fill="#c60000"/>
<rect x="1118" y="233" width="1" height="101" fill="#b70000"/>
<rect x="1119" y="233" width="1" height="101" fill="#c20000"/>
<rect x="1120" y="233" width="1" height="101" fill="#bc0000"/>
<rect x="1121" y="233" width="1" height="101" fill="#c20000"/>
<rect x="1122" y="233" width="1" height="101" fill="#bf0000"/>
<rect x="1123" y="233" width="1" height="101" fill="#b60000"/>
<rect x="1124" y="233" width="1" height="101" fill="#c10000"/>
<rect x="1125" y="233" width="1" height="101" fill="#b90000"/>
<rect x="1126" y="233" width="1" height="101" fill="#b00000"/>
<rect x="1127" y="233" width="1" height="101" fill="#af0000"/>
<rect x="1128" y="233" width="1" height="101" fill="#b70000"/>
<rect x="1129" y="233" width="1" height="101" fill="#b60000"/>
<rect x="1130" y="233" width="1" height="101" fill="#b30000"/>
<rect x="1131" y="233" width="1" height="101" fill="#af0000"/>
<rect x="1132" y="233" width="1" height="101" fill="#b30000"/>
<rect x="1133" y="233" width="1" height="101" fill="#b20000"/>
<rect x="1134" y="233" width="1" height="101" fill="#ba0000"/>
<rect x="1135" y="233" width="1" height="101" fill="#ab0000"/>
<rect x="1136" y="233" width="1" height="101" fill="#b80000"/>
<rect x="1137" y="233" width="1" height="101" fill="#b90000"/>
<rect x="1138" y="233" width="1" height="101" fill="#ab0000"/>
<rect x="1139" y="233" width="1" height="101" fill="#b90000"/>
<rect x="1140" y="233" width="1" height="101" fill="#b50000"/>
<rect x="1141" y="233" width="1" height="101" fill="#b80000"/>
<rect x="1142" y="233" width="1" height="101" fill="#ac0000"/>
<rect x="1143" y="233" width="1" height="101" fill="#ad0000"/>
<rect x="1144" y="233" width="1" height="101" fill="#ad0000"/>
<rect x="1145" y="233" width="1" height="101" fill="#b70000"/>
<rect x="1146" y="233" width="1" height="101" fill="#af0000"/>
<rect x="1147" y="233" width="1" height="101" fill="#ab0000"/>
<rect x="1148" y="233" width="1" height="101" fill="#ab0000"/>
<rect x="1149" y="233" width="1" height="101" fill="#a80000"/>
<rect x="1150" y="233" width="1" height="101" fill="#a30000"/>
<rect x="1151" y="233" width="1" height="101" fill="#a40000"/>
<rect x="1152" y="233" width="1" height="101" fill="#b00000"/>
<rect x="1153" y="233" width="1" height="101" fill="#a60000"/>
<rect x="1154" y="233" width="1" height="101" fill="#b10000"/>
<rect x="1155" y="233" width="1" height="101" fill="#a40000"/>
<rect x="1156" y="233" width="1" height="101" fill="#a40000"/>
<rect x="1157" y="233" width="1" height="101" fill="#a80000"/>
<rect x="1158" y="233" width="1" height="101" fill="#a20000"/>
<rect x="1159" y="233" width="1" height="101" fill="#a40000"/>
<rect x="1160" y="233" width="1" height="101" fill="#ae0000"/>
<rect x="1161" y="233" width="1" height="101" fill="#ad0000"/>
<rect x="1162" y="233" width="1" height="101" fill="#ab0000"/>
<rect x="1163" y="233" width="1" height="101" fill="#a80000"/>
<rect x="1164" y="233" width="1" height="101" fill="#ad0000"/>
<rect x="1165" y="233" width="1" height="101" fill="#ad0000"/>
<rect x="1166" y="233" width="1" height="101" fill="#a60000"/>
<rect x="1167" y="233" width="1" height="101" fill="#a90000"/>
<rect x="1168" y="233" width="1" height="101" fill="#9d0000"/>
<rect x="1169" y="233" width="1" height="101" fill="#a90000"/>
<rect x="1170" y="233" width="1" height="101" fill="#a40000"/>
<rect x="1171" y="233" width="1" height="101" fill="#a90000"/>
<rect x="1172" y="233" width="1" height="101" fill="#a70000"/>
<rect x="1173" y="233" width="1" height="101" fill="#a00000"/>
<rect x="1174" y="233" width="1" height="101" fill="#9c0000"/>
<rect x="1175" y="233" width="1" height="101" fill="#ac0000"/>
<rect x="1176" y="233" width="1" height="101" fill="#9d0000"/>
<rect x="1177" y="233" width="1" height="101" fill="#a30000"/>
<rect x="1178" y="233" width="1" height="101" fill="#a10000"/>
<rect x="1179" y="233" width="1" height="101" fill="#a00000"/>
<rect x="1180" y="233" width="1" height="101" fill="#a80000"/>
<rect x="1181" y="233" width="1" height="101" fill="#ac0000"/>
<rect x="1182" y="233" width="1" height="101" fill="#9f0000"/>
<rect x="1183" y="233" width="1" height="101" fill="#a60000"/>
<rect x="1184" y="233" width="1" height="101" fill="#9f0000"/>
<rect x="1185" y="233" width="1" height="101" fill="#a40000"/>
<rect x="1186" y="233" width="1" height="101" fill="#a10000"/>
<rect x="1187" y="233" width="1" height="101" fill="#9c0000"/>
<rect x="1188" y="233" width="1" height="101" fill="#9c0000"/>
<rect x="1189" y="233" width="1" height="101" fill="#9d0000"/>
<rect x="1190" y="233" width="1" height="101" fill="#a90000"/>
<rect x="1191" y="233" width="1" height="101" fill="#a20000"/>
<rect x="1192" y="233" width="1" height="101" fill="#9d0000"/>
<rect x="1193" y="233" width="1" height="101" fill="#aa0000"/>
<rect x="1194" y="233" width="1" height="101" fill="#ac0000"/>
<rect x="1195" y="233" width="1" height="101" fill="#a20000"/>
<rect x="1196" y="233" width="1" height="101" fill="#9d0000"/>
<rect x="1197" y="233" width="1" height="101" fill="#9e0000"/>
<rect x="1198" y="233" width="1" height="101" fill="#9d0000"/>
<rect x="1199" y="233" width="1" height="101" fill="#a10000"/>
<rect x="1200" y="233" width="1" height="101" fill="#9d0000"/>
<rect x="1201" y="233" width="1" height="101" fill="#a00000"/>
<rect x="1202" y="233" width="1" height="101" fill="#a10000"/>
<rect x="1203" y="233" width="1" height="101" fill="#a70000"/>
<rect x="1204" y="233" width="1" height="101" fill="#ac0000"/>
<rect x="1205" y="233" width="1" height="101" fill="#aa0000"/>
<rect x="1206" y="233" width="1" height="101" fill="#a40000"/>
<rect x="1207" y="233" width="1" height="101" fill="#a50000"/>
<rect x="1208" y="233" width="1" height="101" fill="#a70000"/>
<rect x="1209" y="233" width="1" height="101" fill="#a50000"/>
<rect x="1210" y="233" width="1" height="101" fill="#a40000"/>
<rect x="1211" y="233" width="1" height="101" fill="#9f0000"/>
<rect x="1212" y="233" width="1" height="101" fill="#a30000"/>
<rect x="1213" y="233" width="1" height="101" fill="#b00000"/>
<rect x="1214" y="233" width="1" height="101" fill="#a10000"/>
<rect x="1215" y="233" width="1" height="101" fill="#a80000"/>
<rect x="1216" y="233" width="1" height="101" fill="#ab0000"/>
<rect x="1217" y="233" width="1" height="101" fill="#af0000"/>
<rect x="1218" y="233" width="1" height="101" fill="#a40000"/>
<rect x="1219" y="233" width="1" height="101" fill="#a50000"/>
<rect x="1220" y="233" width="1" height="101" fill="#a50000"/>
<rect x="1221" y="233" width="1" height="101" fill="#a80000"/>
<rect x="1222" y="233" width="1" height="101" fill="#a90000"/>
<rect x="1223" y="233" width="1" height="101" fill="#b20000"/>
<rect x="1224" y="233" width="1" height="101" fill="#b10000"/>
<rect x="1225" y="233" width="1" height="101" fill="#b10000"/>
<rect x="1226" y="233" width="1" height="101" fill="#a20000"/>
<rect x="1227" y="233" width="1" height="101" fill="#a30000"/>
<rect x="1228" y="233" width="1" height="101" fill="#af0000"/>
<rect x="1229" y="233" width="1" height="101" fill="#b30000"/>
<rect x="1230" y="233" width="1" height="101" fill="#ac0000"/>
<rect x="1231" y="233" width="1" height="101" fill="#ae0000"/>
<rect x="1232" y="233" width="1" height="101" fill="#a40000"/>
<rect x="1233" y="233" width="1" height="101" fill="#ab0000"/>
<rect x="1234" y="233" width="1" height="101" fill="#b50000"/>
<rect x="1235" y="233" width="1" height="101" fill="#b40000"/>
<rect x="1236" y="233" width="1" height="101" fill="#b50000"/>
<rect x="1237" y="233" width="1" height="101" fill="#b80000"/>
<rect x="1238" y="233" width="1" height="101" fill="#ab0000"/>
<rect x="1239" y="233" width="1" height="101" fill="#a90000"/>
<rect x="1240" y="233" width="1" height="101" fill="#aa0000"/>
<rect x="1241" y="233" width="1" height="101" fill="#b10000"/>
<rect x="1242" y="233" width="1" height="101" fill="#b50000"/>
<rect x="1243" y="233" width="1" height="101" fill="#ba0000"/>
<rect x="1244" y="233" width="1" height="101" fill="#b60000"/>
<rect x="1245" y="233" width="1" height="101" fill="#b50000"/>
<rect x="1246" y="233" width="1" height="101" fill="#b80000"/>
<rect x="1247" y="233" width="1" height="101" fill="#b30000"/>
<rect x="1248" y="233" width="1" height="101" fill="#b50000"/>
<rect x="1249" y="233" width="1" height="101" fill="#ac0000"/>
<rect x="1250" y="233" width="1" height="101" fill="#ba0000"/>
<rect x="1251" y="233" width="1" height="101" fill="#b10000"/>
<rect x="1252" y="233" width="1" height="101" fill="#bd0000"/>
<rect x="1253" y="233" width="1" height="101" fill="#b90000"/>
<rect x="1254" y="233" width="1" height="101" fill="#b30000"/>
<rect x="1255" y="233" width="1" height="101" fill="#b10000"/>
<rect x="1256" y="233" width="1" height="101" fill="#b30000"/>
<rect x="1257" y="233" width="1" height="101" fill="#bb0000"/>
<rect x="1258" y="233" width="1" height="101" fill="#bc0000"/>
<rect x="1259" y="233" width="1" height="101" fill="#b20000"/>
<rect x="1260" y="233" width="1" height="101" fill="#b20000"/>
<rect x="1261" y="233" width="1" height="101" fill="#ba0000"/>
<rect x="1262" y="233" width="1" height="101" fill="#bc0000"/>
<rect x="1263" y="233" width="1" height="101" fill="#b90000"/>
<rect x="1264" y="233" width="1" height="101" fill="#b60000"/>
<rect x="1265" y="233" width="1" height="101" fill="#be0000"/>
<rect x="1266" y="233" width="1" height="101" fill="#b30000"/>
<rect x="1267" y="233" width="1" height="101" fill="#b90000"/>
<rect x="1268" y="233" width="1" height="101" fill="#bc0000"/>
<rect x="1269" y="233" width="1" height="101" fill="#c60000"/>
<rect x="1270" y="233" width="1" height="101" fill="#c10000"/>
<rect x="1271" y="233" width="1" height="101" fill="#c50000"/>
<rect x="1272" y="233" width="1" height="101" fill="#be0000"/>
<rect x="1273" y="233" width="1" height="101" fill="#ba0000"/>
<rect x="1274" y="233" width="1" height="101" fill="#bb0000"/>
<rect x="1275" y="233" width="1" height="101" fill="#c80000"/>
<rect x="1276" y="233" width="1" height="101" fill="#c40000"/>
<rect x="1277" y="233" width="1" height="101" fill="#bd0000"/>
<rect x="1278" y="233" width="1" height="101" fill="#b80000"/>
<rect x="1279" y="233" width="1" height="101" fill="#c10000"/>
<rect x="1280" y="233" width="1" height="101" fill="#c50000"/>
<rect x="1281" y="233" width="1" height="101" fill="#c10000"/>
<rect x="1282" y="233" width="1" height="101" fill="#be0000"/>
<rect x="1283" y="233" width="1" height="101" fill="#c60000"/>
<rect x="1284" y="233" width="1" height="101" fill="#cb0000"/>
<rect x="1285" y="233" width="1" height="101" fill="#be0000"/>
<rect x="1286" y="233" width="1" height="101" fill="#bb0000"/>
<rect x="1287" y="233" width="1" height="101" fill="#c10000"/>
<rect x="1288" y="233" width="1" height="101" fill="#c30000"/>
<rect x="1289" y="233" width="1" height="101" fill="#c80000"/>
<rect x="1290" y="233" width="1" height="101" fill="#c00000"/>
<rect x="1291" y="233" width="1" height="101" fill="#cb0000"/>
<rect x="1292" y="233" width="1" height="101" fill="#ca0000"/>
<rect x="1293" y="233" width="1" height="101" fill="#c60000"/>
<rect x="1294" y="233" width="1" height="101" fill="#c10000"/>
<rect x="1295" y="233" width="1" height="101" fill="#cf0000"/>
<rect x="1296" y="233" width="1" height="101" fill="#c40000"/>
<rect x="1297" y="233" width="1" height="101" fill="#cd0000"/>
<rect x="1298" y="233" width="1" height="101" fill="#c30000"/>
<rect x="1299" y="233" width="1" height="101" fill="#c30000"/>
<rect x="1300" y="233" width="1" height="101" fill="#cd0000"/>
<rect x="1301" y="233" width="1" height="101" fill="#c50000"/>
<rect x="1302" y="233" width="1" height="101" fill="#d20000"/>
<rect x="1303" y="233" width="1" height="101" fill="#ca0000"/>
<rect x="1304" y="233" width="1" height="101" fill="#c50000"/>
<rect x="1305" y="233" width="1" height="101" fill="#c60000"/>
<rect x="1306" y="233" width="1" height="101" fill="#c90000"/>
<rect x="1307" y="233" width="1" height="101" fill="#ce0000"/>
<rect x="1308" y="233" width="1" height="101" fill="#d40000"/>
<rect x="1309" y="233" width="1" height="101" fill="#c60000"/>
<rect x="1174" y="233" width="1" height="5" fill="#fff"/>
<rect x="1174" y="246" width="1" height="8" fill="#fff"/>
<rect x="1172" y="250" width="1" height="4" fill="#fff"/>
<rect x="1174" y="266" width="1" height="24" fill="#fff"/>
<rect x="1170" y="270" width="1" height="4" fill="#fff"/>
<rect x="1172" y="270" width="1" height="4" fill="#fff"/>
<rect x="1184" y="246" width="1" height="4" fill="#fff"/>
<rect x="1184" y="258" width="1" height="48" fill="#fff"/>
<rect x="1186" y="254" width="1" height="4" fill="#fff"/>
<rect x="1186" y="266" width="1" height="4" fill="#fff"/>
<rect x="1191" y="238" width="1" height="12" fill="#fff"/>
<rect x="1191" y="258" width="1" height="28" fill="#fff"/>
<rect x="1192" y="266" width="1" height="12" fill="#fff"/>
<rect x="1193" y="266" width="1" height="4" fill="#fff"/>
<rect x="1193" y="274" width="1" height="4" fill="#fff"/>
<rect x="1197" y="246" width="1" height="4" fill="#fff"/>
<rect x="1198" y="246" width="1" height="4" fill="#fff"/>
<rect x="1197" y="254" width="1" height="4" fill="#fff"/>
<rect x="1196" y="258" width="1" height="8" fill="#fff"/>
<rect x="1197" y="266" width="1" height="4" fill="#fff"/>
<rect x="1197" y="274" width="1" height="4" fill="#fff"/>
<rect x="1201" y="238" width="1" height="16" fill="#fff"/>
<rect x="1200" y="266" width="1" height="8" fill="#fff"/>
<rect x="1201" y="266" width="1" height="8" fill="#fff"/>
<rect x="1192" y="286" width="1" height="4" fill="#fff"/>
<rect x="1193" y="286" width="1" height="4" fill="#fff"/>
<rect x="1194" y="286" width="1" height="4" fill="#fff"/>
<rect x="1193" y="294" width="1" height="4" fill="#fff"/>
<rect x="1193" y="306" width="1" height="4" fill="#fff"/>
<rect x="1174" y="306" width="1" height="12" fill="#fff"/>
<rect x="1186" y="310" width="1" height="4" fill="#fff"/>
<rect x="1191" y="310" width="1" height="4" fill="#fff"/>
<rect x="1184" y="314" width="1" height="4" fill="#fff"/>
<rect x="1185" y="314" width="1" height="4" fill="#fff"/>
<rect x="1189" y="314" width="1" height="4" fill="#fff"/>
<rect x="1193" y="314" width="1" height="4" fill="#fff"/>
<rect x="1194" y="314" width="1" height="4" fill="#fff"/>
<rect x="1196" y="314" width="1" height="4" fill="#fff"/>
<rect x="1201" y="306" width="1" height="4" fill="#fff"/>
<rect x="1201" y="314" width="1" height="12" fill="#fff"/>
<rect x="1202" y="314" width="1" height="4" fill="#fff"/>
<rect x="1173" y="326" width="1" height="4" fill="#fff"/>
<rect x="1174" y="326" width="1" height="4" fill="#fff"/>
<rect x="1184" y="326" width="1" height="8" fill="#fff"/>
<rect x="1189" y="326" width="1" height="8" fill="#fff"/>
<rect x="1191" y="330" width="1" height="4" fill="#fff"/>
<rect x="1196" y="326" width="1" height="4" fill="#fff"/>
<rect x="1197" y="330" width="1" height="4" fill="#fff"/>
<rect x="1310" y="233" width="1" height="101" fill="#ffc000"/>
<rect x="1311" y="233" width="2" height="101" fill="#0000e0"/>
<rect x="711.5" y="232.5" width="602" height="102" fill="none" stroke="#000"/>
<rect x="1313" y="232" width="68" height="103" fill="#fff"/>
<rect x="1313" y="232" width="68" height="2" fill="#000"/>
<rect x="1313" y="333" width="68" height="2" fill="#000"/>
<rect x="1313" y="232" width="1" height="103" fill="#000"/>
<rect x="1378" y="232" width="1" height="103" fill="#000"/>
<rect x="1380" y="232" width="1" height="103" fill="#000"/>
<rect x="1313" y="252" width="66" height="1" fill="#000"/>
<text x="1345.8" y="248" font-size="12" text-anchor="middle" font-weight="bold" textLength="48" lengthAdjust="spacingAndGlyphs" fill="#000">Intensity</text>
<rect x="1347" y="258" width="25" height="71" fill="url(#jet)"/>
<rect x="1346.5" y="257.5" width="26" height="72" fill="none" stroke="#000"/>
<rect x="1343" y="257" width="4" height="1" fill="#000"/>
<text x="1340.5" y="260.2" font-size="8.6" text-anchor="end" textLength="11" lengthAdjust="spacingAndGlyphs" fill="#000">100</text>
<rect x="1343" y="293" width="4" height="1" fill="#000"/>
<text x="1340.5" y="296.2" font-size="8.6" text-anchor="end" textLength="8" lengthAdjust="spacingAndGlyphs" fill="#000">50</text>
<rect x="1343" y="329" width="4" height="1" fill="#000"/>
<text x="1340.5" y="332.2" font-size="8.6" text-anchor="end" textLength="4.5" lengthAdjust="spacingAndGlyphs" fill="#000">0</text>
<rect x="1346" y="293" width="27" height="1" fill="#000"/>
<rect x="782" y="385" width="598" height="1" fill="#c4c4c4"/>
<rect x="782" y="436" width="598" height="1" fill="#c4c4c4"/>
<rect x="885" y="376" width="1" height="92" fill="#c4c4c4"/>
<rect x="958" y="376" width="1" height="92" fill="#c4c4c4"/>
<rect x="1031" y="376" width="1" height="92" fill="#c4c4c4"/>
<rect x="1104" y="376" width="1" height="92" fill="#c4c4c4"/>
<rect x="1177" y="376" width="1" height="92" fill="#c4c4c4"/>
<rect x="1250" y="376" width="1" height="92" fill="#c4c4c4"/>
<rect x="812" y="470" width="1" height="3" fill="#c4c4c4"/>
<rect x="885" y="470" width="1" height="3" fill="#c4c4c4"/>
<rect x="958" y="470" width="1" height="3" fill="#c4c4c4"/>
<rect x="1031" y="470" width="1" height="3" fill="#c4c4c4"/>
<rect x="1104" y="470" width="1" height="3" fill="#c4c4c4"/>
<rect x="1177" y="470" width="1" height="3" fill="#c4c4c4"/>
<rect x="1250" y="470" width="1" height="3" fill="#c4c4c4"/>
<rect x="1380" y="470" width="1" height="3" fill="#c4c4c4"/>
<g clip-path="url(#clip375)">
<text x="813.5" y="486" font-size="11.5" text-anchor="middle" fill="#000">407</text>
<text x="886.5" y="486" font-size="11.5" text-anchor="middle" fill="#000">486</text>
<text x="959.5" y="486" font-size="11.5" text-anchor="middle" fill="#000">566</text>
<text x="1032.5" y="486" font-size="11.5" text-anchor="middle" fill="#000">645</text>
<text x="1105.5" y="486" font-size="11.5" text-anchor="middle" fill="#000">725</text>
<text x="1178.5" y="486" font-size="11.5" text-anchor="middle" fill="#000">804</text>
<text x="1251.5" y="486" font-size="11.5" text-anchor="middle" fill="#000">884</text>
</g>
<clipPath id="clip375"><rect x="770" y="473" width="620" height="9"/></clipPath>
<text x="769" y="390" font-size="10.5" fill="#000">145</text>
<text x="769" y="441" font-size="10.5" fill="#000">140</text>
<rect x="785.5" y="375.5" width="595" height="93" fill="none" stroke="#000"/>
<rect x="812" y="375" width="1" height="94" fill="#000"/>
<path d="M811.3,418.5 L814.1,400.3 L817.4,431.2 L821.9,426.3 L823.3,413.6 L826.4,423.5 L829.6,405.9 L834.5,415.7 L836.7,415.7 L839.5,412.9 L841.6,398.8 L847.2,440.4 L850.3,413.9 L855.0,432.6 L858.5,412.2 L861.3,437.5 L864.8,427.7 L870.4,444.6 L873.2,397.4 L876.8,396.7 L879.6,424.2 L882.4,394.6 L885.9,426.3 L888.7,427.7 L893.6,403.8 L896.5,423.5 L902.8,411.5 L908.4,426.3 L911.2,396.0 L914.7,403.1 L917.6,403.8 L920.4,430.5 L923.2,416.4 L926.3,426.3 L928.5,379.8 L934.2,415.7 L937.3,396.0 L940.8,437.5 L943.5,427.0 L946.3,431.9 L948.4,419.2 L951.3,415.7 L955.5,398.8 L958.3,434.0 L964.6,412.9 L967.4,439.6 L969.5,419.2 L975.2,446.7 L981.5,415.0 L985.0,416.4 L987.8,438.9 L993.5,406.6 L996.3,443.2 L999.8,436.8 L1002.6,438.9 L1006.1,431.9 L1007.5,399.5 L1011.1,401.7 L1013.2,434.7 L1019.5,408.0 L1022.3,454.4 L1025.1,415.0 L1028.6,423.5 L1032.2,420.7 L1034.6,399.8 L1040.6,412.2 L1043.4,434.0 L1051.2,411.5 L1054.7,430.5 L1057.5,394.6 L1061.0,399.5 L1063.5,432.6 L1068.7,416.4 L1072.3,424.2 L1075.8,387.6 L1081.3,422.8 L1084.8,408.7 L1089.1,406.6 L1092.6,412.2 L1095.8,408.7 L1101.0,432.6 L1104.5,401.7 L1107.6,443.9 L1109.5,403.8 L1113.7,398.8 L1119.3,463.6 L1124.2,429.1 L1127.8,454.4 L1133.4,396.0 L1136.2,427.7 L1139.7,432.6 L1142.5,407.3 L1145.4,429.8 L1148.2,412.2 L1151.7,412.9 L1154.5,441.8 L1159.4,398.1 L1162.2,440.4 L1165.8,447.4 L1171.4,408.0 L1174.2,440.4 L1177.7,423.5 L1180.5,425.6 L1182.6,409.4 L1186.9,405.2 L1189.7,431.9 L1191.8,411.5 L1195.3,408.7 L1197.4,435.4 L1203.3,396.0 L1206.6,411.5 L1210.1,406.6 L1212.1,413.6 L1215.6,384.8 L1219.8,413.6 L1224.1,417.1 L1227.6,410.1 L1236.0,429.1 L1238.8,386.9 L1241.7,408.7 L1244.5,408.7 L1250.1,389.7 L1252.9,424.2 L1259.2,408.0 L1265.6,429.1 L1268.4,410.1 L1274.7,420.7 L1276.4,378.4 L1279.6,401.7 L1282.9,396.7 L1288.1,427.7 L1291.3,410.1 L1294.4,441.8 L1297.5,429.1 L1300.3,447.4 L1306.4,420.0 L1312.7,433.3 L1314.8,422.1 L1317.6,448.8 L1319.7,412.2 L1323.3,406.6 L1326.8,408.0 L1329.3,452.3 L1332.4,410.1 L1333.8,446.7 L1338.7,450.9 L1341.5,400.7 L1345.6,430.0 L1349.0,431.6 L1350.7,405.5 L1353.2,446.8" fill="none" stroke="#000" stroke-width="4.6" stroke-linejoin="round" stroke-linecap="round"/>
<rect x="711" y="507" width="603" height="122" fill="#000"/>
<rect x="712" y="508" width="1" height="120" fill="#000088"/>
<rect x="724" y="508" width="2" height="120" fill="#000088"/>
<rect x="728" y="508" width="1" height="120" fill="#000088"/>
<rect x="735" y="508" width="1" height="120" fill="#000088"/>
<rect x="739" y="508" width="1" height="120" fill="#000088"/>
<rect x="746" y="508" width="1" height="120" fill="#000088"/>
<rect x="749" y="508" width="2" height="120" fill="#000088"/>
<rect x="753" y="508" width="1" height="120" fill="#000088"/>
<rect x="761" y="508" width="3" height="120" fill="#000088"/>
<rect x="768" y="508" width="1" height="120" fill="#000088"/>
<rect x="770" y="508" width="2" height="120" fill="#000088"/>
<rect x="778" y="508" width="2" height="120" fill="#000088"/>
<rect x="781" y="508" width="1" height="120" fill="#000088"/>
<rect x="785" y="508" width="1" height="120" fill="#000088"/>
<rect x="788" y="508" width="1" height="120" fill="#000088"/>
<rect x="791" y="508" width="1" height="120" fill="#000088"/>
<rect x="794" y="508" width="1" height="120" fill="#000088"/>
<rect x="801" y="508" width="1" height="120" fill="#000088"/>
<rect x="804" y="508" width="1" height="120" fill="#000088"/>
<rect x="807" y="508" width="2" height="120" fill="#000088"/>
<rect x="810" y="508" width="1" height="120" fill="#000088"/>
<rect x="813" y="508" width="1" height="120" fill="#000088"/>
<rect x="815" y="508" width="1" height="120" fill="#000088"/>
<rect x="825" y="508" width="1" height="120" fill="#000088"/>
<rect x="833" y="508" width="1" height="120" fill="#000088"/>
<rect x="840" y="508" width="1" height="120" fill="#000088"/>
<rect x="843" y="508" width="1" height="120" fill="#000088"/>
<rect x="845" y="508" width="1" height="120" fill="#000088"/>
<rect x="847" y="508" width="1" height="120" fill="#000088"/>
<rect x="856" y="508" width="2" height="120" fill="#000088"/>
<rect x="861" y="508" width="1" height="120" fill="#000088"/>
<rect x="865" y="508" width="2" height="120" fill="#000088"/>
<rect x="873" y="508" width="2" height="120" fill="#000088"/>
<rect x="879" y="508" width="1" height="120" fill="#000088"/>
<rect x="881" y="508" width="2" height="120" fill="#000088"/>
<rect x="885" y="508" width="1" height="120" fill="#000088"/>
<rect x="887" y="508" width="1" height="120" fill="#000088"/>
<rect x="889" y="508" width="1" height="120" fill="#000088"/>
<rect x="891" y="508" width="2" height="120" fill="#000088"/>
<rect x="894" y="508" width="1" height="120" fill="#000088"/>
<rect x="898" y="508" width="3" height="120" fill="#000088"/>
<rect x="902" y="508" width="2" height="120" fill="#000088"/>
<rect x="905" y="508" width="1" height="120" fill="#000088"/>
<rect x="909" y="508" width="1" height="120" fill="#000088"/>
<rect x="915" y="508" width="1" height="120" fill="#000088"/>
<rect x="921" y="508" width="1" height="120" fill="#000088"/>
<rect x="924" y="508" width="3" height="120" fill="#000088"/>
<rect x="934" y="508" width="2" height="120" fill="#000088"/>
<rect x="937" y="508" width="1" height="120" fill="#000088"/>
<rect x="939" y="508" width="1" height="120" fill="#000088"/>
<rect x="943" y="508" width="1" height="120" fill="#000088"/>
<rect x="945" y="508" width="2" height="120" fill="#000088"/>
<rect x="949" y="508" width="2" height="120" fill="#000088"/>
<rect x="955" y="508" width="1" height="120" fill="#000088"/>
<rect x="958" y="508" width="1" height="120" fill="#000088"/>
<rect x="960" y="508" width="1" height="120" fill="#000088"/>
<rect x="965" y="508" width="1" height="120" fill="#000088"/>
<rect x="967" y="508" width="1" height="120" fill="#000088"/>
<rect x="972" y="508" width="1" height="120" fill="#000088"/>
<rect x="976" y="508" width="1" height="120" fill="#000088"/>
<rect x="978" y="508" width="2" height="120" fill="#000088"/>
<rect x="983" y="508" width="1" height="120" fill="#000088"/>
<rect x="992" y="508" width="1" height="120" fill="#000088"/>
<rect x="994" y="508" width="5" height="120" fill="#000088"/>
<rect x="1002" y="508" width="1" height="120" fill="#000088"/>
<rect x="1006" y="508" width="2" height="120" fill="#000088"/>
<rect x="1009" y="508" width="1" height="120" fill="#000088"/>
<rect x="1013" y="508" width="1" height="120" fill="#000088"/>
<rect x="1019" y="508" width="1" height="120" fill="#000088"/>
<rect x="1021" y="508" width="1" height="120" fill="#000088"/>
<rect x="1029" y="508" width="3" height="120" fill="#000088"/>
<rect x="1033" y="508" width="1" height="120" fill="#000088"/>
<rect x="1037" y="508" width="1" height="120" fill="#000088"/>
<rect x="1040" y="508" width="2" height="120" fill="#000088"/>
<rect x="1045" y="508" width="2" height="120" fill="#000088"/>
<rect x="1050" y="508" width="1" height="120" fill="#000088"/>
<rect x="1062" y="508" width="1" height="120" fill="#000088"/>
<rect x="1066" y="508" width="2" height="120" fill="#000088"/>
<rect x="1070" y="508" width="2" height="120" fill="#000088"/>
<rect x="1078" y="508" width="1" height="120" fill="#000088"/>
<rect x="1082" y="508" width="1" height="120" fill="#000088"/>
<rect x="1084" y="508" width="1" height="120" fill="#000088"/>
<rect x="1086" y="508" width="1" height="120" fill="#000088"/>
<rect x="1092" y="508" width="1" height="120" fill="#000088"/>
<rect x="1097" y="508" width="2" height="120" fill="#000088"/>
<rect x="1102" y="508" width="1" height="120" fill="#000088"/>
<rect x="1105" y="508" width="1" height="120" fill="#000088"/>
<rect x="1110" y="508" width="2" height="120" fill="#000088"/>
<rect x="1113" y="508" width="1" height="120" fill="#000088"/>
<rect x="1116" y="508" width="1" height="120" fill="#000088"/>
<rect x="1119" y="508" width="1" height="120" fill="#000088"/>
<rect x="1122" y="508" width="2" height="120" fill="#000088"/>
<rect x="1126" y="508" width="1" height="120" fill="#000088"/>
<rect x="1137" y="508" width="1" height="120" fill="#000088"/>
<rect x="1139" y="508" width="1" height="120" fill="#000088"/>
<rect x="1142" y="508" width="1" height="120" fill="#000088"/>
<rect x="1144" y="508" width="1" height="120" fill="#000088"/>
<rect x="1147" y="508" width="1" height="120" fill="#000088"/>
<rect x="1159" y="508" width="4" height="120" fill="#000088"/>
<rect x="1165" y="508" width="1" height="120" fill="#000088"/>
<rect x="1170" y="508" width="1" height="120" fill="#000088"/>
<rect x="1183" y="508" width="2" height="120" fill="#000088"/>
<rect x="1189" y="508" width="1" height="120" fill="#000088"/>
<rect x="1197" y="508" width="1" height="120" fill="#000088"/>
<rect x="1201" y="508" width="1" height="120" fill="#000088"/>
<rect x="1203" y="508" width="1" height="120" fill="#000088"/>
<rect x="1207" y="508" width="1" height="120" fill="#000088"/>
<rect x="1210" y="508" width="1" height="120" fill="#000088"/>
<rect x="1214" y="508" width="2" height="120" fill="#000088"/>
<rect x="1221" y="508" width="1" height="120" fill="#000088"/>
<rect x="1225" y="508" width="1" height="120" fill="#000088"/>
<rect x="1229" y="508" width="1" height="120" fill="#000088"/>
<rect x="1231" y="508" width="2" height="120" fill="#000088"/>
<rect x="1237" y="508" width="1" height="120" fill="#000088"/>
<rect x="1239" y="508" width="1" height="120" fill="#000088"/>
<rect x="1242" y="508" width="1" height="120" fill="#000088"/>
<rect x="1253" y="508" width="2" height="120" fill="#000088"/>
<rect x="1258" y="508" width="1" height="120" fill="#000088"/>
<rect x="1265" y="508" width="1" height="120" fill="#000088"/>
<rect x="1276" y="508" width="1" height="120" fill="#000088"/>
<rect x="1280" y="508" width="1" height="120" fill="#000088"/>
<rect x="1286" y="508" width="1" height="120" fill="#000088"/>
<rect x="1290" y="508" width="2" height="120" fill="#000088"/>
<rect x="1295" y="508" width="1" height="120" fill="#000088"/>
<rect x="1298" y="508" width="1" height="120" fill="#000088"/>
<rect x="1305" y="508" width="1" height="120" fill="#000088"/>
<rect x="1313" y="507" width="68" height="122" fill="#fff"/>
<rect x="1313" y="507" width="68" height="2" fill="#000"/>
<rect x="1313" y="627" width="68" height="2" fill="#000"/>
<rect x="1313" y="507" width="1" height="122" fill="#000"/>
<rect x="1378" y="507" width="1" height="122" fill="#000"/>
<rect x="1380" y="507" width="1" height="122" fill="#000"/>
<rect x="1313" y="531" width="66" height="1" fill="#000"/>
<text x="1345.8" y="526" font-size="13" text-anchor="middle" font-weight="bold" textLength="52" lengthAdjust="spacingAndGlyphs" fill="#000">Intensity</text>
<rect x="1347" y="537" width="25" height="85" fill="url(#jet)"/>
<rect x="1346.5" y="536.5" width="26" height="86" fill="none" stroke="#000"/>
<rect x="1343" y="536" width="4" height="1" fill="#000"/>
<text x="1340.5" y="539.2" font-size="8.6" text-anchor="end" textLength="11" lengthAdjust="spacingAndGlyphs" fill="#000">100</text>
<rect x="1343" y="579" width="4" height="1" fill="#000"/>
<text x="1340.5" y="582.2" font-size="8.6" text-anchor="end" textLength="8" lengthAdjust="spacingAndGlyphs" fill="#000">50</text>
<rect x="1343" y="622" width="4" height="1" fill="#000"/>
<text x="1340.5" y="625.2" font-size="8.6" text-anchor="end" textLength="4.5" lengthAdjust="spacingAndGlyphs" fill="#000">0</text>
<rect x="1346" y="579" width="27" height="1" fill="#000"/>
</svg>
</body></html>
